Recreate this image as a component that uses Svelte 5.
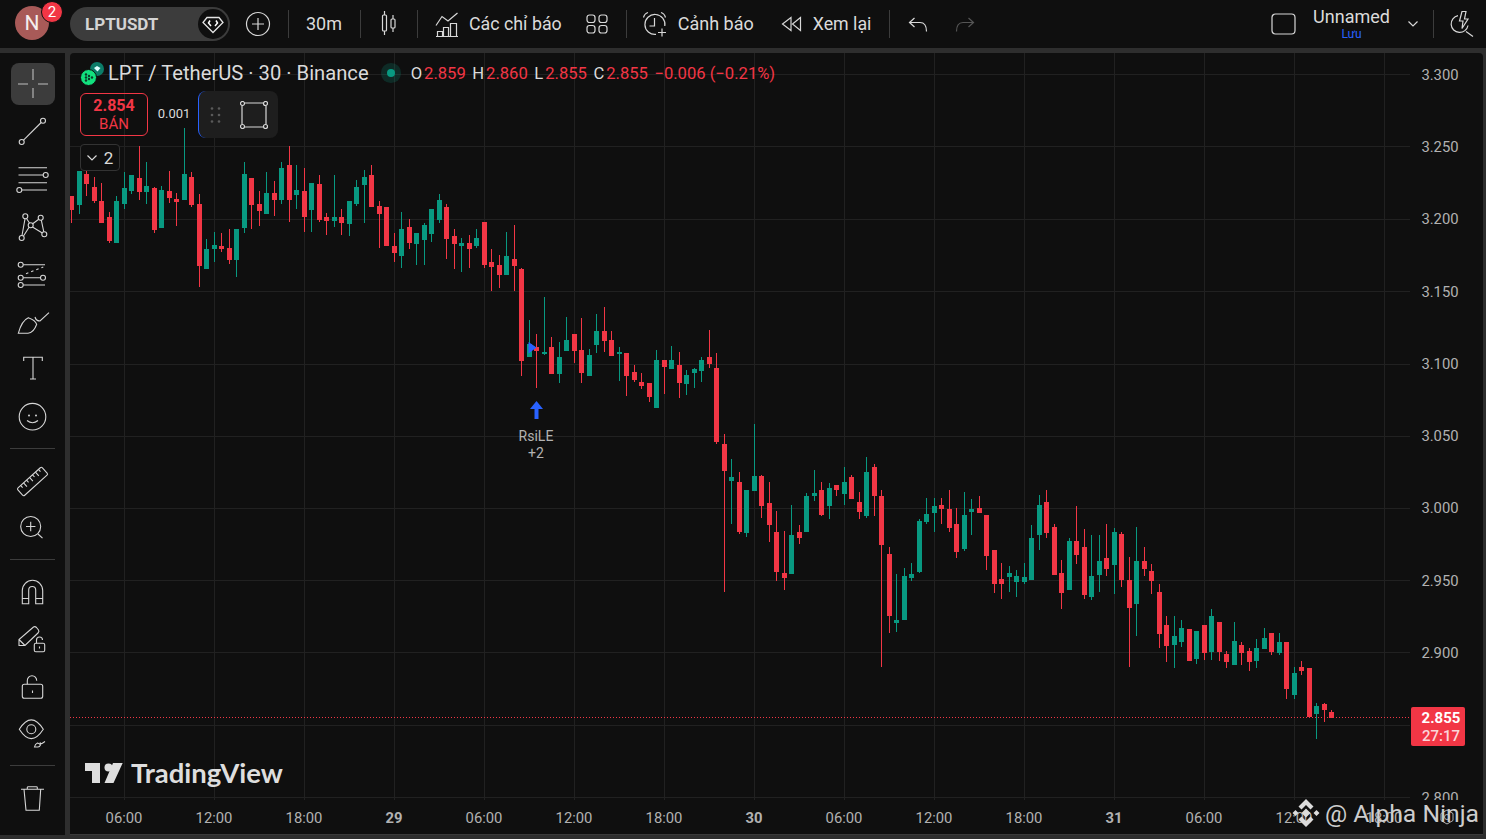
<script>
  const rows = [
    [196,210,196,223,0],[171,205,171,214,1],[174,184,171,196,0],[187,201,177,203,0],[201,223,183,223,0],[217,241,212,243,0],[201,243,196,243,1],[188,204,172,209,1],[175,191,175,194,1],[178,192,146,200,0],[186,192,162,204,1],[188,230,187,233,0],[190,228,186,228,1],[191,198,171,203,0],[199,202,193,226,0],[174,200,128,200,1],[177,205,172,207,0],[204,266,194,287,0],[249,269,239,269,1],[245,249,232,262,1],[246,249,233,252,0],[248,260,229,264,0],[229,260,229,277,1],[174,228,162,233,1],[178,205,178,229,0],[204,211,191,226,0],[193,214,172,214,1],[193,200,181,216,0],[168,200,162,204,1],[165,200,146,222,0],[190,195,165,209,1],[191,217,168,232,0],[183,210,183,232,1],[184,220,175,222,0],[217,221,213,235,0],[217,221,175,227,1],[217,223,209,235,0],[201,224,201,236,1],[187,204,180,206,1],[177,185,170,223,1],[175,207,165,207,0],[206,214,201,248,0],[207,246,207,246,0],[246,253,233,262,0],
    [229,256,212,268,1],[227,243,219,249,0],[233,244,233,265,1],[225,240,223,265,1],[209,234,209,242,1],[200,220,194,223,1],[207,239,204,259,0],[236,244,229,269,0],[243,246,238,272,1],[243,249,235,268,0],[238,246,229,248,1],[222,265,222,268,0],[262,267,249,291,0],[265,275,255,288,0],[256,275,232,275,1],[259,266,225,291,0],[269,361,268,376,0],[344,357,320,357,1],[347,351,334,388,0],[352,354,297,355,1],[347,374,337,374,0],[357,374,342,383,1],[340,351,317,351,1],[334,351,334,363,0],[350,373,318,383,0],[355,376,349,376,1],[331,345,314,353,1],[331,341,307,352,0],[340,356,331,356,0],[352,354,347,381,1],[353,376,353,396,0],[372,380,365,382,0],[382,386,373,389,0],[383,397,383,402,0],[360,408,350,408,1],[360,367,360,394,0],[360,369,346,369,1],[365,383,352,398,0],[375,384,370,395,1],[369,373,368,388,1],[360,371,357,382,1],[357,364,330,368,0],[368,442,353,444,0],
    [444,471,434,592,0],[477,481,459,524,1],[482,532,472,534,0],[490,533,490,537,1],[476,491,424,491,1],[476,506,475,518,0],[503,525,482,542,0],[532,572,511,581,0],[573,578,531,590,0],[535,574,505,574,1],[532,538,525,544,0],[496,532,493,532,1],[493,496,470,501,1],[490,515,482,516,0],[488,506,483,519,1],[485,490,485,496,0],[482,494,467,505,1],[477,499,475,499,0],[502,512,492,519,0],[472,516,457,518,1],[467,496,464,516,0],[496,545,490,667,0],[554,616,547,633,0],[620,623,574,632,1],[576,620,568,620,1],[574,578,563,581,1],[521,572,519,573,1],[514,522,498,524,1],[506,513,498,532,1],[505,509,498,524,0],[509,528,490,532,0],[524,552,508,558,0],[515,549,492,551,1],[509,512,499,535,1],[508,513,496,513,0],[515,556,515,570,0],[550,584,550,593,0],[579,584,563,599,0],[573,577,566,592,1],[576,582,570,597,1],[577,582,563,584,1],
    [538,580,525,580,1],[505,535,495,550,1],[502,533,490,538,0],[527,575,524,575,0],[573,593,560,609,0],[541,590,538,590,1],[541,555,506,564,0],[547,595,529,599,0],[576,597,535,600,1],[561,575,535,592,1],[558,569,524,576,0],[532,565,528,594,1],[534,580,532,587,0],[580,608,557,667,0],[561,604,527,636,1],[561,569,547,576,0],[571,581,564,594,0],[592,634,584,648,0],[625,646,616,662,0],[636,645,616,668,1],[628,642,620,647,1],[629,661,629,661,0],[631,659,631,664,1],[625,653,625,660,0],[616,652,609,660,1],[622,652,622,661,0],[654,662,651,668,0],[641,665,622,665,1],[645,653,642,665,0],[651,662,648,671,0],[648,661,639,668,1],[638,649,628,649,1],[633,652,633,655,0],[642,653,633,655,1],[642,689,642,699,0],[673,695,667,699,1],[667,671,661,675,0],[668,717,668,717,0],[706,714,703,739,1],[704,710,703,722,0],[712,718,710,718,0]
  ];
  const candles = rows.map((r, i) => ({ x: Math.floor(71.8 + 7.5 * i), top: r[0], h: r[1] - r[0], wt: r[2], wh: r[3] - r[2], cls: r[4] ? 'up' : 'down' }));
  const hLines = [74,146,219,291,364,436,508,580,652,725,797];
  const vLines = [124,214,304,394,484,574,664,754,844,934,1024,1114,1204,1294,1384];
  const prices = [['3.300',80],['3.250',152],['3.200',224],['3.150',297],['3.100',369],['3.050',441],['3.000',513],['2.950',586],['2.900',658],['2.800',803]];
  const times = ['06:00','12:00','18:00','29','06:00','12:00','18:00','30','06:00','12:00','18:00','31','06:00','12:00','18:00'];
</script>

<div class="page">
  <header class="topbar">
    <div class="avatar">N<span class="badge">2</span></div>
    <div class="pill">
      <span class="sym">LPTUSDT</span>
      <span class="gem">
        <svg width="30" height="30" viewBox="0 0 30 30"><path d="M9 8.500h12l4 5-10 10L5 13.500z" fill="none" stroke="#e4e4e4" stroke-width="1.300"/><path d="M12 11.500l-1.500 2.500 2.500 3M18 11.500l1.500 2.500-2.500 3" fill="none" stroke="#fff" stroke-width="1.500"/></svg>
      </span>
    </div>
    <svg class="ic plus" width="26" height="26" viewBox="0 0 26 26"><circle cx="13" cy="13" r="11.500"/><path d="M13 7v12M7 13h12"/></svg>
    <i class="div d1"></i>
    <span class="item tf">30m</span>
    <i class="div d2"></i>
    <svg class="ic candle" width="20" height="26" viewBox="0 0 20 26"><path d="M6.500 0v4M6.500 20v4M15 4v4M15 17v4"/><rect x="4.500" y="4" width="4" height="16" rx="1"/><rect x="13" y="8" width="4" height="9" rx="1"/></svg>
    <i class="div d3"></i>
    <svg class="ic indi" width="24" height="25" viewBox="0 0 24 25"><path d="M1 13.500L7 4.500l6 4.500L22.500 1"/><path d="M2.500 24.500v-5h5v5M8.500 24.500v-9h5v9M15.500 24.500v-13h6v13M1 24.500h22"/></svg>
    <span class="item lbl1">Các chỉ báo</span>
    <svg class="ic grid4" width="22" height="20" viewBox="0 0 22 20"><rect x="1" y="1" width="8" height="7.500" rx="2.500"/><rect x="13" y="1" width="8" height="7.500" rx="2.500"/><rect x="1" y="11.500" width="8" height="7.500" rx="2.500"/><rect x="13" y="11.500" width="8" height="7.500" rx="2.500"/></svg>
    <i class="div d4"></i>
    <svg class="ic alarm" width="26" height="26" viewBox="0 0 26 26"><path d="M14 23.400A10 10 0 1 1 22.800 15"/><path d="M12.500 7v8h-5M1.500 6.500Q2.500 2.500 6 1.500M19 1.500q3.500 1 4.500 5M20 17.500v8M16 21.500h8"/></svg>
    <span class="item lbl2">Cảnh báo</span>
    <svg class="ic rewind" width="21" height="16" viewBox="0 0 21 16"><path d="M10 1.500L1.500 8l8.500 6.500zM19.500 1.500L11.500 8l8 6.500z"/></svg>
    <span class="item lbl3">Xem lại</span>
    <i class="div d5"></i>
    <svg class="ic undo" width="20" height="15" viewBox="0 0 20 15"><path d="M1.500 5.500h10.500q6.500 0 6.500 9M6.500 1l-5 4.500 5 4.500"/></svg>
    <svg class="ic redo" width="20" height="15" viewBox="0 0 20 15"><path d="M18.500 5.500H8q-6.500 0-6.500 9M13.500 1l5 4.500-5 4.500"/></svg>
    <div class="spacer"></div>
    <svg class="ic layout" width="25" height="22" viewBox="0 0 25 22"><rect x="1" y="1" width="23" height="20" rx="3.500"/></svg>
    <div class="save"><span class="name">Unnamed</span><span class="luu">Lưu</span></div>
    <svg class="ic chev" width="10" height="6" viewBox="0 0 10 6"><path d="M.5 .5L5 5 9.500 .5"/></svg>
    <i class="div d6"></i>
    <svg class="ic bolt" width="26" height="26" viewBox="0 0 26 26"><path d="M8 4.600A8.500 8.500 0 1 0 18 14.500M16 20.500l7 5"/><path d="M12 .5h4L14.500 8H18l-6 9.500L13 10H9.500z"/></svg>
  </header>

  <main class="main">
    <nav class="toolbar">
      <div class="tool"><svg class="ti active" viewBox="0 0 44 42"><path d="M7 21h10M27 21h10M22 6v11M22 25v10"/></svg></div>
      <div class="tool"><svg class="ti" viewBox="0 0 44 42"><circle cx="10.700" cy="32" r="2.500"/><circle cx="32" cy="10.700" r="2.500"/><path d="M12.500 30.200L30.200 12.500"/></svg></div>
      <div class="tool"><svg class="ti" viewBox="0 0 44 42"><path d="M7.500 9.700H36M7.500 17H32M7.500 24.700H36M11 32H36"/><circle cx="34.700" cy="17" r="2.500"/><circle cx="8.300" cy="32" r="2.500"/></svg></div>
      <div class="tool"><svg class="ti" viewBox="0 0 44 42"><circle cx="14.300" cy="10.300" r="2.500"/><circle cx="29.700" cy="11.700" r="2.500"/><circle cx="19.700" cy="19.300" r="2.500"/><circle cx="33.300" cy="28.300" r="2.500"/><circle cx="10.700" cy="32" r="2.500"/><path d="M11 29.500l3-16.700M15.500 12.500l3 4.500M21.500 21l9.800 6M12.500 30l5.600-8.700M21.700 17.700l6-4.500M30.300 14.200l2.500 11.600"/></svg></div>
      <div class="tool"><svg class="ti" viewBox="0 0 44 42"><circle cx="9.700" cy="11.700" r="2.500"/><circle cx="9.700" cy="24.700" r="2.500"/><circle cx="32" cy="24.700" r="2.500"/><circle cx="9.700" cy="32" r="2.500"/><path d="M12.200 11.700H34M12.200 24.700h17.300M12.200 32H34"/><path d="M15 20.700L32.300 14" stroke-dasharray="2.500 3"/></svg></div>
      <div class="tool"><svg class="ti" viewBox="0 0 44 42"><path d="M7.300 32.300C9 26 12 19 17.300 16.700 21 18 25 21 25.700 23.300 24 28 21 32 17 32.300zM7.300 32.300H17"/><path d="M24 16q1 4 5 4l9-8.300"/></svg></div>
      <div class="tool"><svg class="ti" viewBox="0 0 44 42"><path d="M12.700 13V9.300h18.600V13M22 9.300V31M19 31h6"/></svg></div>
      <div class="tool"><svg class="ti" viewBox="0 0 44 42"><circle cx="21.500" cy="20.700" r="13.300"/><path d="M16 24.500q5.500 4.500 11 0"/><circle class="fill" cx="18" cy="19.500" r="1"/><circle class="fill" cx="25" cy="19.500" r="1"/></svg></div>
      <hr />
      <div class="tool"><svg class="ti" viewBox="0 0 44 42"><g transform="rotate(-42 21.500 21.500)"><rect x="5" y="16.500" width="33" height="10" rx="1.500"/><path d="M10 16.500v3M14 16.500v5M18 16.500v3M22 16.500v5M26 16.500v3M30 16.500v5M34 16.500v3"/></g></svg></div>
      <div class="tool"><svg class="ti" viewBox="0 0 44 42"><circle cx="19.700" cy="19.500" r="10"/><path d="M15 19.500h9.400M19.700 14.800v9.400M27 27l4.500 4.200"/></svg></div>
      <hr />
      <div class="tool"><svg class="ti" viewBox="0 0 44 42"><path d="M11.300 32.700V19.500a10.200 10.200 0 0 1 20.400 0v13.200h-7V19a3.500 3.500 0 0 0-7 0v13.700zM11.300 27.500h6.400M24.700 27.500h7"/></svg></div>
      <div class="tool"><svg class="ti" viewBox="0 0 44 42"><path d="M8 27.500v-6L22.500 9q1.500-1 3 .5l2 2.500q1 1.500-.5 3L14 27.500zM8 21.500l6 6"/><rect x="23.300" y="25.300" width="10.400" height="8.400" rx="1.500"/><path d="M25.500 25.300V22a3 3 0 0 1 6 0M28.500 28.500v2"/></svg></div>
      <div class="tool"><svg class="ti" viewBox="0 0 44 42"><rect x="11.300" y="18.300" width="20.400" height="14" rx="2"/><path d="M16.300 18.300v-3.600a4.700 5 0 0 1 9.400 0M21.500 24.500v2.500"/></svg></div>
      <div class="tool"><svg class="ti" viewBox="0 0 44 42"><path d="M8.300 15.300Q20.300-3.500 32.300 15.300 20.300 34 8.300 15.300z"/><circle cx="20.300" cy="15.300" r="4.500"/><path d="M23.500 33q.5-3 3-4 2.500 .8 3 2-1 2-2.500 2zM29 28.500q.5 1.500 2 1l3-2"/></svg></div>
      <hr />
      <div class="tool"><svg class="ti" viewBox="0 0 44 42"><path d="M10 12.300h23M13 12.300l2 21h13.300l1.400-21M16.300 12.300v-1.800q0-.8 1-.8h8q1 0 1 .8v1.800"/></svg></div>
    </nav>

    <section class="chart">
      <svg class="plot" width="1413" height="782" viewBox="70 53 1413 782">
        {#each hLines as y}<rect class="grid" x="70" y={y} width="1340" height="1" />{/each}
        {#each vLines as x}<rect class="grid" x={x} y="53" width="1" height="747" />{/each}
        <rect class="axis-line" x="70" y="834" width="1413" height="1" />
        <path class="last" d="M70 717.500H1411" />
        {#each candles as c}
          <rect class={c.cls} x={c.x} y={c.wt} width="1" height={c.wh} />
          <rect class={c.cls} x={c.x - 2} y={c.top} width="5" height={c.h} />
        {/each}
        <path class="mark" d="M528.500 342l8 5.500-8 6zM536.500 401l6.500 8h-4.500v10h-4v-10H530z" />
        <text class="rsi" x="536" y="441">RsiLE</text>
        <text class="rsi" x="536" y="458">+2</text>
        {#each prices as p}<text class="price" x="1440" y={p[1]}>{p[0]}</text>{/each}
        <rect class="cover" x="1404" y="800" width="79" height="34" />
        {#each times as t, i}<text class="time" class:strong={t.length === 2} x={vLines[i]} y="823">{t}</text>{/each}
        <path class="gear" d="M1447 810l6 3.500v7l-6 3.500-6-3.500v-7z" />
        <circle class="gear" cx="1447" cy="817" r="2.500" />
        <path class="tv" d="M85 763h15v20h-8v-12h-7zM113 763h9.700l-9.200 20h-9z" />
        <circle class="tv" cx="108.500" cy="767.500" r="4" />
        <text class="brand" x="131" y="783">TradingView</text>
        <path class="bnb" d="M1306 799l7.500 7.500-3 3-4.500-4.500-4.500 4.500-3-3zM1306 827l-7.500-7.500 3-3 4.500 4.500 4.500-4.500 3 3zM1306 808.500l4.500 4.500-4.500 4.500-4.500-4.500zM1295.500 810l3 3-3 3-3-3zM1316.500 810l3 3-3 3-3-3z" />
        <text class="alpha" x="1325" y="822">@ Alpha Ninja</text>
      </svg>

      <div class="tag"><b>2.855</b><span>27:17</span></div>

      <div class="legend">
        <div class="title-row">
          <svg class="coin" width="24" height="24" viewBox="0 0 24 24"><circle cx="17" cy="8" r="7" fill="#0b7c68"/><path d="M14 7l3-2 3.500 2-3 3.500z" fill="#dff"/><circle cx="8.500" cy="16.500" r="8" fill="#12e07e" stroke="#0f0f0f"/><g fill="#0a3b28"><circle cx="6" cy="13.500" r="1.200"/><circle cx="6" cy="16.500" r="1.200"/><circle cx="6" cy="19.500" r="1.200"/><circle cx="9" cy="15" r="1.200"/><circle cx="9" cy="18" r="1.200"/><circle cx="12" cy="16.500" r="1.200"/></g></svg>
          <span class="title">LPT / TetherUS · 30 · Binance</span>
          <span class="dot"></span>
          <span class="ohlc">
            <span class="kv"><em>O</em>2.859</span>
            <span class="kv"><em>H</em>2.860</span>
            <span class="kv"><em>L</em>2.855</span>
            <span class="kv"><em>C</em>2.855</span>
            <span class="kv">−0.006 (−0.21%)</span>
          </span>
        </div>
        <div class="trade-row">
          <div class="sell"><b>2.854</b><span>BÁN</span></div>
          <span class="qty">0.001</span>
          <div class="panel">
            <svg width="14" height="18" viewBox="0 0 14 18" fill="#5a5a5a"><circle cx="3" cy="2.500" r="1.300"/><circle cx="10" cy="2.500" r="1.300"/><circle cx="3" cy="9" r="1.300"/><circle cx="10" cy="9" r="1.300"/><circle cx="3" cy="15.500" r="1.300"/><circle cx="10" cy="15.500" r="1.300"/></svg>
            <svg class="ic" width="28" height="28" viewBox="0 0 28 28"><path d="M4.500 2H23.500M4.500 26H23.500M2 4.500V23.500M26 4.500V23.500"/><circle cx="2.500" cy="2.500" r="2"/><circle cx="25.500" cy="2.500" r="2"/><circle cx="2.500" cy="25.500" r="2"/><circle cx="25.500" cy="25.500" r="2"/></svg>
          </div>
        </div>
        <div class="collapse"><svg class="ic" width="10" height="6" viewBox="0 0 10 6"><path d="M.5 .5L5 5 9.500 .5"/></svg><span>2</span></div>
      </div>
    </section>
  </main>
</div>

<style>
  :global(body) { margin: 0; background: #2e2e2e; }
  .page { width: 1486px; height: 839px; overflow: hidden; background: #2e2e2e; font-family: Roboto, "Liberation Sans", sans-serif; color: #dbdbdb; }
  .topbar { height: 48px; margin-bottom: 5px; background: #0f0f0f; display: flex; align-items: center; position: relative; }
  .avatar { position: relative; width: 34px; height: 34px; margin: -2px 0 0 15px; border-radius: 50%; background: #a85a58; color: #f4eeee; font-size: 21px; font-weight: 400; display: flex; align-items: center; justify-content: center; }
  .badge { position: absolute; top: -5px; left: 26px; width: 20px; height: 20px; border-radius: 50%; background: #f23645; color: #fff; font-size: 15px; font-weight: 400; line-height: 20px; text-align: center; border: 1px solid #0f0f0f; }
  .pill { width: 160px; height: 34px; margin-left: 21px; border-radius: 17px; background: #3c3c3c; display: flex; align-items: center; justify-content: space-between; padding-left: 15px; box-sizing: border-box; }
  .sym { font-size: 17px; font-weight: 700; color: #d4d4d4; margin-top: -1px; }
  .gem { width: 30px; height: 30px; margin-right: 2px; border-radius: 50%; background: #0f0f0f; display: flex; }
  .ic { fill: none; stroke: #d8d8d8; stroke-width: 1.200; flex: none; }
  .plus { margin-left: 15px; }
  .div { width: 1px; height: 28px; background: #3c3c3c; flex: none; }
  .d1 { margin-left: 17px; }
  .item { font-size: 18px; white-space: nowrap; margin-top: -2px; }
  .tf { margin-left: 17px; }
  .d2 { margin-left: 18px; }
  .candle { margin-left: 17px; }
  .d3 { margin-left: 19px; }
  .indi { margin-left: 17px; }
  .lbl1 { margin-left: 10px; font-size: 17.800px; }
  .grid4 { margin-left: 24px; }
  .d4 { margin-left: 18px; }
  .alarm { margin-left: 15px; }
  .lbl2 { margin-left: 10px; }
  .rewind { margin-left: 27px; }
  .lbl3 { margin-left: 11px; font-size: 17.800px; }
  .d5 { margin-left: 18px; }
  .undo { margin-left: 18px; }
  .redo { margin-left: 27px; stroke: #555; }
  .spacer { flex: 1; }
  .layout { margin-right: 17px; }
  .save { display: flex; flex-direction: column; align-items: center; width: 77px; line-height: 1; margin-top: -1px; }
  .name { font-size: 18px; }
  .luu { font-size: 12px; color: #2962ff; margin-top: 2px; }
  .chev { margin-left: 18px; }
  .d6 { margin-left: 15px; }
  .bolt { margin-left: 16px; margin-right: 10px; }

  .main { display: flex; height: 782px; }
  .toolbar { width: 65px; background: #0f0f0f; padding-top: 7px; box-sizing: border-box; flex: none; display: flex; flex-direction: column; align-items: center; }
  .tool { height: 47.600px; width: 100%; display: flex; align-items: center; justify-content: center; flex: none; }
  .ti { width: 44px; height: 42px; fill: none; stroke: #d6d6d6; stroke-width: 1.100; }
  .ti .fill { fill: #d6d6d6; stroke: none; }
  .ti.active { background: #3c3c3c; border-radius: 8px; stroke: #bdbdbd; }
  .toolbar hr { width: 45px; height: 1px; margin: 7px 0 8px; border: 0; background: #3c3c3c; flex: none; }

  .chart { position: relative; width: 1413px; margin-left: 5px; background: #0f0f0f; border-radius: 4px 4px 0 0; overflow: hidden; flex: none; }
  .plot { display: block; }
  .grid { fill: #212121; }
  .axis-line { fill: #3a3a3a; }
  .cover { fill: #0f0f0f; }
  .last { fill: none; stroke: #f23645; stroke-dasharray: 1 2; }
  .up { fill: #089981; }
  .down { fill: #f23645; }
  .mark { fill: #2962ff; }
  .rsi { font-size: 14px; fill: #b2b2b2; text-anchor: middle; }
  .price { font-size: 14.800px; fill: #b2b2b2; text-anchor: middle; }
  .time { font-size: 14.800px; fill: #b2b2b2; text-anchor: middle; }
  .time.strong { font-weight: 700; }
  .gear { fill: none; stroke: #b2b2b2; }
  .tv { fill: #dedede; }
  .brand { font-family: Lato, sans-serif; font-size: 27.500px; font-weight: 700; fill: #dedede; }
  .bnb { fill: #dcdcdc; }
  .alpha { font-size: 24.700px; fill: #cdcdcd; }

  .tag { position: absolute; left: 1341px; top: 654px; width: 54px; height: 39px; padding-left: 6px; box-sizing: border-box; background: #f23645; border-radius: 2px; color: #fff; font-size: 15px; line-height: 18px; display: flex; flex-direction: column; align-items: center; justify-content: center; }
  .tag b { font-weight: 700; }
  .tag span { color: #fbd5d9; font-weight: 500; }

  .legend { position: absolute; left: 10px; top: 8px; display: flex; flex-direction: column; align-items: flex-start; }
  .title-row { display: flex; align-items: center; height: 24px; }
  .coin { overflow: visible; flex: none; }
  .title { font-size: 20.200px; margin-left: 4px; color: #dbdbdb; white-space: nowrap; }
  .dot { width: 8px; height: 8px; margin-left: 18px; margin-right: 16px; border-radius: 50%; background: #089981; box-shadow: 0 0 0 6px rgba(8,153,129,.2); flex: none; }
  .ohlc { font-size: 16.600px; color: #f23645; white-space: nowrap; display: flex; gap: 6.500px; }
  .ohlc em { font-style: normal; color: #dbdbdb; margin-right: 2px; }
  .trade-row { display: flex; align-items: center; margin-top: 6px; }
  .sell { width: 68px; height: 43px; box-sizing: border-box; border: 1px solid #f23645; border-radius: 6px; color: #f23645; display: flex; flex-direction: column; align-items: center; justify-content: center; font-size: 15px; line-height: 18px; }
  .sell b { font-weight: 700; font-size: 16px; }
  .qty { width: 50px; text-align: center; font-size: 13px; color: #dbdbdb; margin-top: -2px; padding-left: 2px; box-sizing: border-box; }
  .panel { width: 80px; height: 47px; box-sizing: border-box; background: #1e1e1e; border-radius: 8px; border-left: 1px solid #2962ff; display: flex; align-items: center; justify-content: space-between; padding: 0 10px; }
  .collapse { width: 40px; height: 27px; box-sizing: border-box; margin-top: 6px; border: 1px solid #333; border-radius: 4px; background: #0f0f0f; display: flex; align-items: center; justify-content: center; gap: 7px; font-size: 17px; line-height: 24px; }
</style>
